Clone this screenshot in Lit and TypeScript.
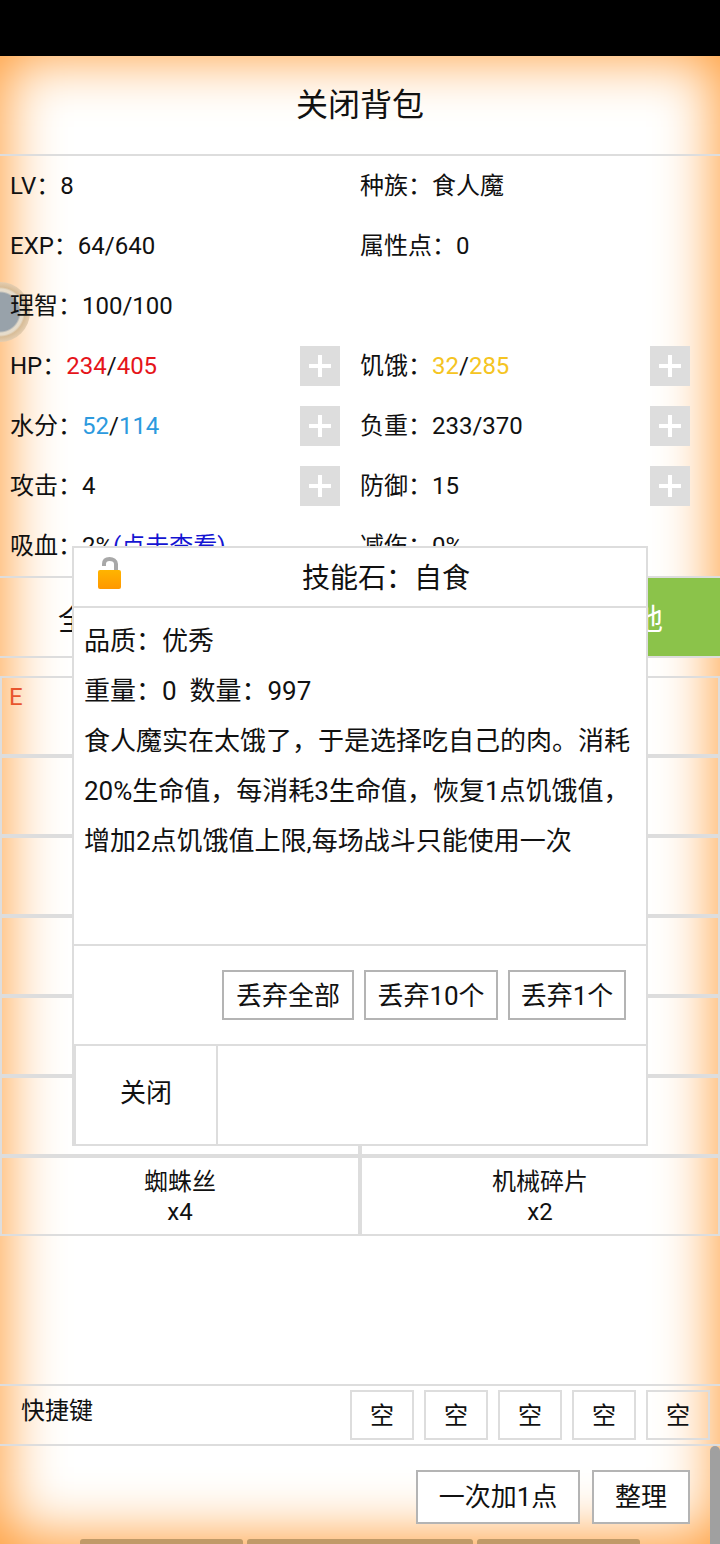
import { css, html, LitElement } from 'lit';
import { customElement } from 'lit/decorators.js';

const SHORTCUTS = ['空', '空', '空', '空', '空'];

@customElement('app-root')
export class AppRoot extends LitElement {
  static override styles = css`
    :host {
      display: block;
      width: 720px;
      height: 1544px;
      overflow: hidden;
      position: relative;
      background: #000;
      color: #111;
      font-family: Roboto, 'Noto Sans CJK SC', sans-serif;
      font-size: 24px;
    }
    .status {
      height: 56px;
      background: #000;
    }
    .page {
      position: relative;
      height: 1488px;
      background: #fff;
      box-shadow: inset 0 -3px 58px 4px #ff9a33;
      display: flex;
      flex-direction: column;
    }
    .header {
      height: 98px;
      flex: none;
      box-sizing: content-box;
      display: flex;
      align-items: center;
      justify-content: center;
      font-size: 32px;
      border-bottom: 2px solid #ddd;
    }
    .header span {
      padding-bottom: 6px;
    }
    .stats {
      display: grid;
      grid-template-columns: 360px 360px;
      grid-auto-rows: 60px;
      height: 420px;
      flex: none;
      position: relative;
    }
    .stat {
      display: flex;
      align-items: center;
      justify-content: space-between;
      padding: 0 20px 0 10px;
      position: relative;
    }
    .stat.right {
      padding: 0 30px 0 0;
    }
    .stat > div:first-child {
      padding-bottom: 6px;
    }
    .plus {
      width: 40px;
      height: 40px;
      background: #ddd;
      display: flex;
      align-items: center;
      justify-content: center;
    }
    .red { color: #e5141a; }
    .yellow { color: #f5c422; }
    .blue { color: #2c9ade; }
    .link { color: #1414d2; }
    .avatar {
      position: absolute;
      left: -30px;
      top: 126px;
      width: 60px;
      height: 60px;
      border-radius: 50%;
      background: radial-gradient(
        circle,
        #98a2aa 0,
        #98a2aa 19px,
        #e6dccb 21px,
        #e6dccb 23px,
        #d8bd98 25px,
        #e4cdb0 30px
      );
    }
    .tabs {
      height: 78px;
      flex: none;
      border-top: 2px solid #ddd;
      border-bottom: 2px solid #ddd;
      display: flex;
      justify-content: space-between;
      font-size: 30px;
    }
    .tab {
      display: flex;
      align-items: center;
      padding-left: 58px;
    }
    .tab.on {
      width: 220px;
      box-sizing: border-box;
      padding: 0 57px 0 0;
      justify-content: flex-end;
      background: #8bc34a;
      color: #fff;
    }
    .items {
      margin-top: 18px;
      display: grid;
      grid-template-columns: 360px 360px;
      grid-auto-rows: 80px;
      flex: none;
    }
    .cell {
      box-sizing: border-box;
      border: 2px solid #ddd;
      padding-top: 2px;
      display: flex;
      flex-direction: column;
      align-items: center;
      justify-content: center;
      line-height: 30px;
    }
    .cell.tag {
      align-items: flex-start;
      justify-content: flex-start;
      color: #e8552d;
      font-size: 24px;
      padding: 4px 7px;
    }
    .spacer {
      height: 148px;
      flex: none;
    }
    .keys {
      height: 58px;
      flex: none;
      border-top: 2px solid #ddd;
      border-bottom: 2px solid #ddd;
      display: flex;
      justify-content: space-between;
      padding: 0 10px 0 21px;
    }
    .keys .label {
      line-height: 50px;
    }
    .slots {
      display: flex;
      gap: 10px;
      padding-top: 4px;
    }
    .slot {
      box-sizing: border-box;
      width: 64px;
      height: 50px;
      padding-bottom: 4px;
      border: 2px solid #ddd;
      display: flex;
      align-items: center;
      justify-content: center;
    }
    .actions {
      display: flex;
      justify-content: flex-end;
      gap: 12px;
      padding: 24px 30px 0 0;
    }
    .btn {
      box-sizing: border-box;
      border: 2px solid #b4b4b4;
      background: #fff;
      padding-bottom: 4px;
      display: flex;
      align-items: center;
      justify-content: center;
      font-size: 26px;
    }
    .actions .btn {
      height: 54px;
      padding-bottom: 6px;
    }
    .actions .wide {
      width: 164px;
    }
    .actions .narrow {
      width: 98px;
    }
    .dialog {
      position: absolute;
      left: 72px;
      top: 490px;
      width: 576px;
      height: 600px;
      box-sizing: border-box;
      border: 2px solid #ddd;
      background: #fff;
      display: flex;
      flex-direction: column;
      font-size: 26px;
    }
    .title {
      height: 60px;
      box-sizing: border-box;
      flex: none;
      border-bottom: 2px solid #ddd;
      display: flex;
      align-items: center;
    }
    .lock {
      width: 52px;
      flex: none;
      padding: 0 0 7px 23px;
      box-sizing: border-box;
      display: flex;
    }
    .title span {
      flex: 1;
      text-align: center;
      font-size: 28px;
      padding-bottom: 2px;
    }
    .body {
      height: 336px;
      flex: none;
      box-sizing: border-box;
      padding: 8px 10px 0 10px;
      line-height: 50px;
    }
    .drop {
      height: 102px;
      flex: none;
      box-sizing: border-box;
      border-top: 2px solid #ddd;
      border-bottom: 2px solid #ddd;
      display: flex;
      justify-content: flex-end;
      align-items: center;
      gap: 10px;
      padding-right: 20px;
    }
    .drop .btn {
      height: 50px;
    }
    .drop .all { width: 132px; }
    .drop .ten { width: 134px; }
    .drop .one { width: 118px; }
    .close-row {
      flex: 1;
      display: flex;
    }
    .close {
      width: 144px;
      box-sizing: border-box;
      border-left: 2px solid #ddd;
      border-right: 2px solid #ddd;
      padding-bottom: 10px;
      display: flex;
      align-items: center;
      justify-content: center;
    }
    .scrollbar {
      position: absolute;
      right: 0;
      top: 1446px;
      width: 10px;
      height: 98px;
      border-radius: 5px 5px 0 0;
      background: #a0a0a0;
    }
    .nav {
      position: absolute;
      top: 1539px;
      height: 5px;
      background: #c09a68;
      border-radius: 3px 3px 0 0;
    }
    .nav.a { left: 80px; width: 163px; }
    .nav.b { left: 247px; width: 226px; }
    .nav.c { left: 477px; width: 163px; }
  `;

  private plus() {
    return html`<div class="plus">
      <svg width="22" height="22" viewBox="0 0 22 22">
        <path d="M9 0h4v9h9v4h-9v9H9v-9H0V9h9z" fill="#fff" />
      </svg>
    </div>`;
  }

  override render() {
    return html`
      <div class="status"></div>
      <div class="page">
        <div class="header"><span>关闭背包</span></div>
        <div class="stats">
          <div class="avatar"></div>
          <div class="stat"><div>LV：8</div></div>
          <div class="stat right"><div>种族：食人魔</div></div>
          <div class="stat"><div>EXP：64/640</div></div>
          <div class="stat right"><div>属性点：0</div></div>
          <div class="stat"><div>理智：100/100</div></div>
          <div class="stat right"></div>
          <div class="stat">
            <div>HP：<span class="red">234</span>/<span class="red">405</span></div>
            ${this.plus()}
          </div>
          <div class="stat right">
            <div>饥饿：<span class="yellow">32</span>/<span class="yellow">285</span></div>
            ${this.plus()}
          </div>
          <div class="stat">
            <div>水分：<span class="blue">52</span>/<span class="blue">114</span></div>
            ${this.plus()}
          </div>
          <div class="stat right"><div>负重：233/370</div>${this.plus()}</div>
          <div class="stat"><div>攻击：4</div>${this.plus()}</div>
          <div class="stat right"><div>防御：15</div>${this.plus()}</div>
          <div class="stat"><div>吸血：2%<span class="link">(点击查看)</span></div></div>
          <div class="stat right"><div>减伤：0%</div></div>
        </div>
        <div class="tabs">
          <div class="tab">全部</div>
          <div class="tab on">地</div>
        </div>
        <div class="items">
          <div class="cell tag">E</div>
          <div class="cell"></div>
          ${Array.from({ length: 10 }, () => html`<div class="cell"></div>`)}
          <div class="cell"><div>蜘蛛丝</div><div>x4</div></div>
          <div class="cell"><div>机械碎片</div><div>x2</div></div>
        </div>
        <div class="spacer"></div>
        <div class="keys">
          <div class="label">快捷键</div>
          <div class="slots">
            ${SHORTCUTS.map((s) => html`<div class="slot">${s}</div>`)}
          </div>
        </div>
        <div class="actions">
          <div class="btn wide">一次加1点</div>
          <div class="btn narrow">整理</div>
        </div>
        <div class="dialog">
          <div class="title">
            <div class="lock">
              <svg width="25" height="33" viewBox="0 0 25 33">
                <defs>
                  <linearGradient id="lockBody" x1="0" y1="0" x2="0" y2="1">
                    <stop offset="0" stop-color="#ffb400" />
                    <stop offset="1" stop-color="#ff9800" />
                  </linearGradient>
                </defs>
                <path
                  d="M7 9V7C7 3.8 9 2 12.5 2S19 3.8 19 7V15"
                  fill="none"
                  stroke="#a8a8a8"
                  stroke-width="4"
                />
                <rect x="1" y="13" width="23" height="19" rx="2" fill="url(#lockBody)" />
              </svg>
            </div>
            <span>技能石：自食</span>
          </div>
          <div class="body">
            <div>品质：优秀</div>
            <div>重量：0&nbsp;&nbsp;数量：997</div>
            <div>
              食人魔实在太饿了，于是选择吃自己的肉。消耗20%生命值，每消耗3生命值，恢复1点饥饿值，增加2点饥饿值上限,每场战斗只能使用一次
            </div>
          </div>
          <div class="drop">
            <div class="btn all">丢弃全部</div>
            <div class="btn ten">丢弃10个</div>
            <div class="btn one">丢弃1个</div>
          </div>
          <div class="close-row"><div class="close">关闭</div></div>
        </div>
      </div>
      <div class="scrollbar"></div>
      <div class="nav a"></div>
      <div class="nav b"></div>
      <div class="nav c"></div>
    `;
  }
}
